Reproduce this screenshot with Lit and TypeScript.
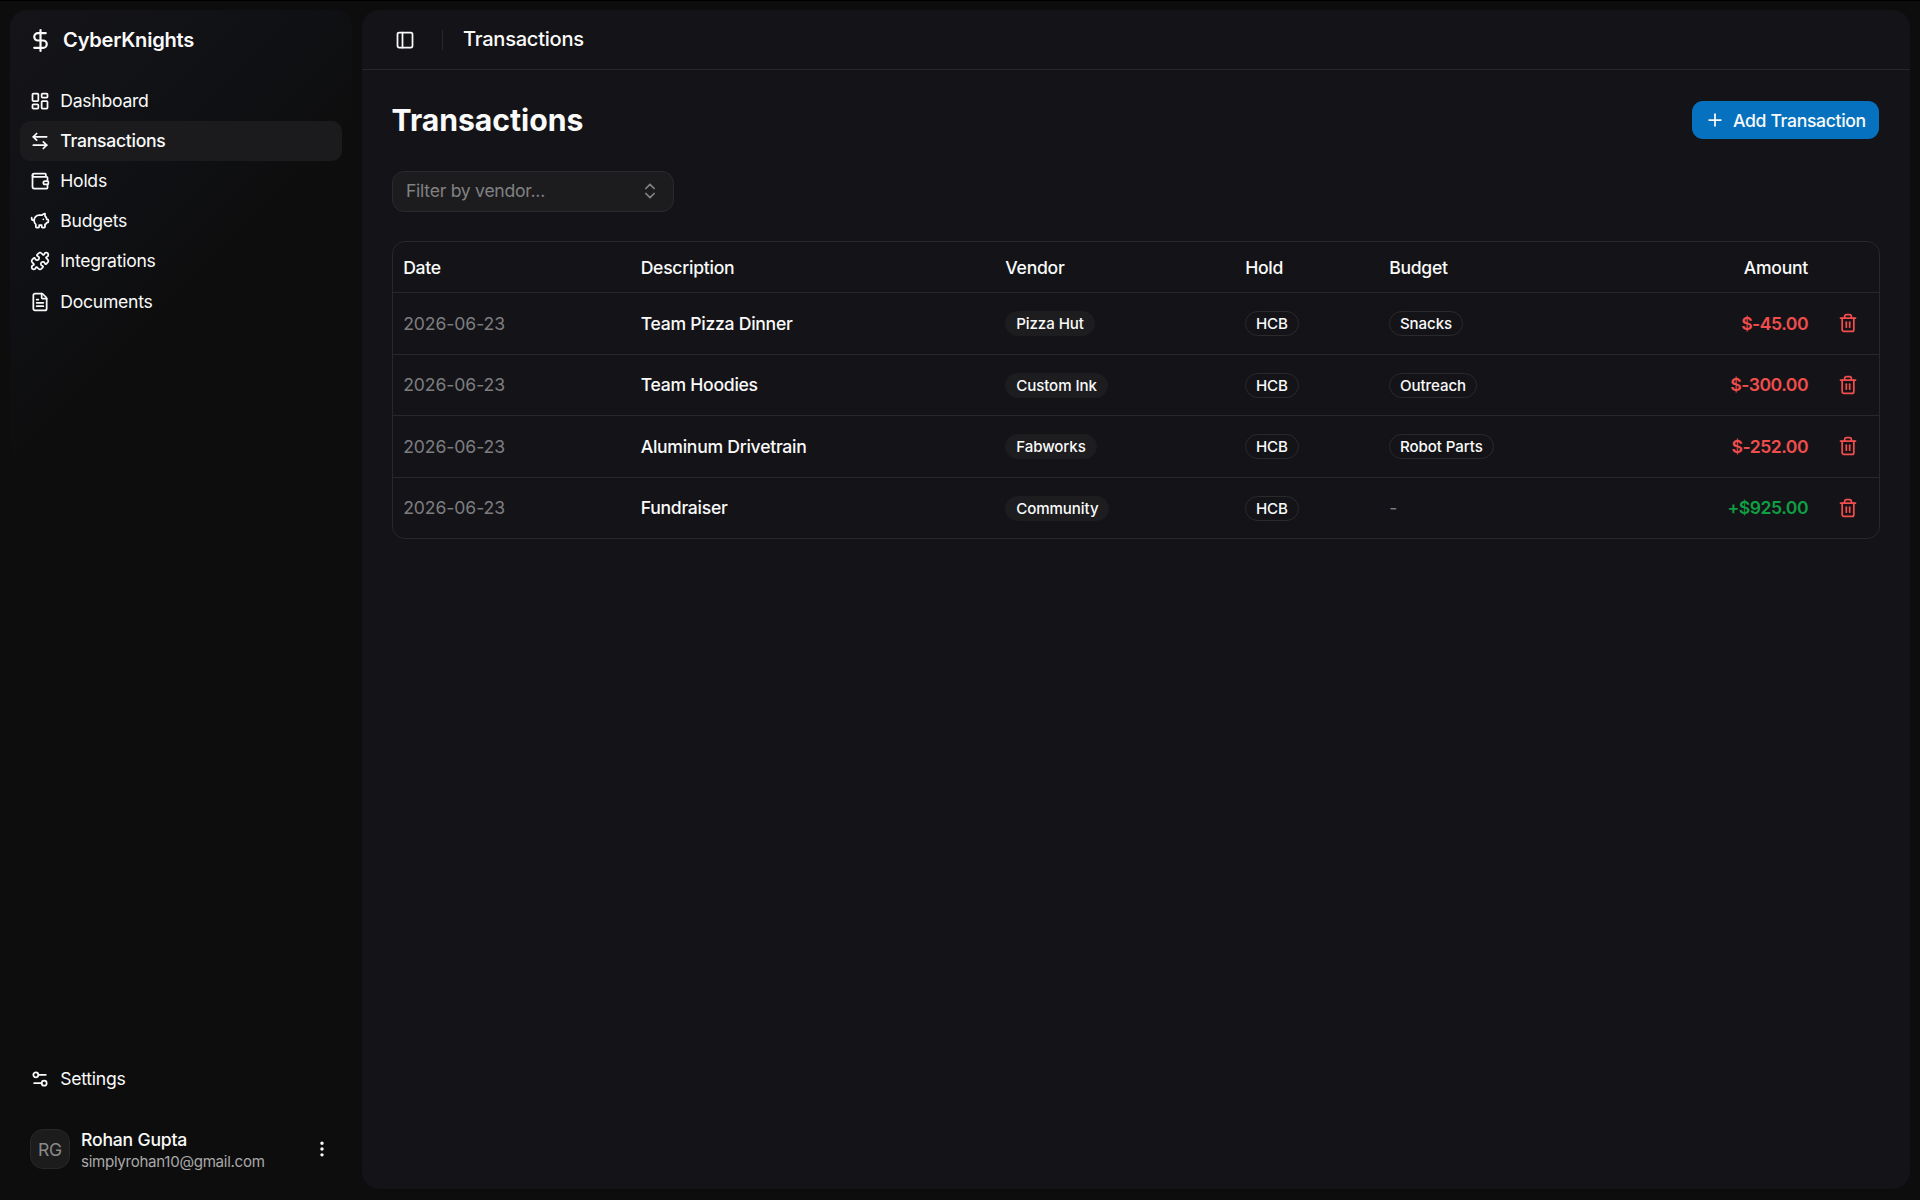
import { LitElement, html, css, svg } from "lit";
import { customElement, property } from "lit/decorators.js";

const ICONS: Record<string, unknown> = {
  dollar: svg`<line x1="12" x2="12" y1="2" y2="22"/><path d="M17 5H9.5a3.5 3.5 0 0 0 0 7h5a3.5 3.5 0 0 1 0 7H6"/>`,
  dashboard: svg`<rect width="7" height="9" x="3" y="3" rx="1"/><rect width="7" height="5" x="14" y="3" rx="1"/><rect width="7" height="9" x="14" y="12" rx="1"/><rect width="7" height="5" x="3" y="16" rx="1"/>`,
  arrows: svg`<path d="M8 3 4 7l4 4"/><path d="M4 7h16"/><path d="m16 21 4-4-4-4"/><path d="M20 17H4"/>`,
  wallet: svg`<path d="M19 7V4a1 1 0 0 0-1-1H5a2 2 0 0 0 0 4h15a1 1 0 0 1 1 1v4h-3a2 2 0 0 0 0 4h3a1 1 0 0 0 1-1v-2a1 1 0 0 0-1-1"/><path d="M3 5v14a2 2 0 0 0 2 2h15a1 1 0 0 0 1-1v-4"/>`,
  piggy: svg`<path d="M11 17h3v2a1 1 0 0 0 1 1h2a1 1 0 0 0 1-1v-3a3.16 3.16 0 0 0 2-2h1a1 1 0 0 0 1-1v-2a1 1 0 0 0-1-1h-1a5 5 0 0 0-2-4V3a4 4 0 0 0-3.2 1.6l-.3.4H11a6 6 0 0 0-6 6v1a5 5 0 0 0 2 4v3a1 1 0 0 0 1 1h2a1 1 0 0 0 1-1z"/><path d="M16 10h.01"/><path d="M2 8v1a2 2 0 0 0 2 2h1"/>`,
  puzzle: svg`<path d="M15.39 4.39a1 1 0 0 0 1.68-.474 2.5 2.5 0 1 1 3.014 3.015 1 1 0 0 0-.474 1.68l1.683 1.682a2.414 2.414 0 0 1 0 3.414L19.61 15.39a1 1 0 0 1-1.68-.474 2.5 2.5 0 1 0-3.014 3.015 1 1 0 0 1 .474 1.68l-1.683 1.682a2.414 2.414 0 0 1-3.414 0L8.61 19.61a1 1 0 0 0-1.68.474 2.5 2.5 0 1 1-3.014-3.015 1 1 0 0 0 .474-1.68l-1.683-1.682a2.414 2.414 0 0 1 0-3.414L4.39 8.61a1 1 0 0 1 1.68.474 2.5 2.5 0 1 0 3.014-3.015 1 1 0 0 1-.474-1.68l1.683-1.682a2.414 2.414 0 0 1 3.414 0z"/>`,
  file: svg`<path d="M6 22a2 2 0 0 1-2-2V4a2 2 0 0 1 2-2h8a2.4 2.4 0 0 1 1.704.706l3.588 3.588A2.4 2.4 0 0 1 20 8v12a2 2 0 0 1-2 2z"/><path d="M14 2v5a1 1 0 0 0 1 1h5"/><path d="M10 9H8"/><path d="M16 13H8"/><path d="M16 17H8"/>`,
  settings: svg`<path d="M14 17H5"/><path d="M19 7h-9"/><circle cx="17" cy="17" r="3"/><circle cx="7" cy="7" r="3"/>`,
  more: svg`<circle cx="12" cy="12" r="1"/><circle cx="12" cy="5" r="1"/><circle cx="12" cy="19" r="1"/>`,
  panel: svg`<rect width="18" height="18" x="3" y="3" rx="2"/><path d="M9 3v18"/>`,
  plus: svg`<path d="M5 12h14"/><path d="M12 5v14"/>`,
  updown: svg`<path d="m7 15 5 5 5-5"/><path d="m7 9 5-5 5 5"/>`,
  trash: svg`<path d="M10 11v6"/><path d="M14 11v6"/><path d="M19 6v14a2 2 0 0 1-2 2H7a2 2 0 0 1-2-2V6"/><path d="M3 6h18"/><path d="M8 6V4a2 2 0 0 1 2-2h4a2 2 0 0 1 2 2v2"/>`,
};

@customElement("ui-icon")
class UiIcon extends LitElement {
  static styles = css`
    :host { display: block; flex: none; width: 20px; height: 20px; }
    .glyph {
      display: block; width: 100%; height: 100%; fill: none; stroke: currentColor;
      stroke-width: 2.1; stroke-linecap: round; stroke-linejoin: round; overflow: visible;
    }
  `;
  @property() name = "";
  render() {
    return html`<svg class="glyph" viewBox="0 0 24 24">${ICONS[this.name]}</svg>`;
  }
}

const NAV = [
  { icon: "dashboard", label: "Dashboard" },
  { icon: "arrows", label: "Transactions", active: true },
  { icon: "wallet", label: "Holds" },
  { icon: "piggy", label: "Budgets" },
  { icon: "puzzle", label: "Integrations" },
  { icon: "file", label: "Documents" },
];

const ROWS = [
  { date: "2026-06-23", text: "Team Pizza Dinner", vendor: "Pizza Hut", hold: "HCB", budget: "Snacks", amount: -45 },
  { date: "2026-06-23", text: "Team Hoodies", vendor: "Custom Ink", hold: "HCB", budget: "Outreach", amount: -300 },
  { date: "2026-06-23", text: "Aluminum Drivetrain", vendor: "Fabworks", hold: "HCB", budget: "Robot Parts", amount: -252 },
  { date: "2026-06-23", text: "Fundraiser", vendor: "Community", hold: "HCB", budget: "", amount: 925 },
];

@customElement("app-root")
class AppRoot extends LitElement {
  static styles = css`
    * { box-sizing: border-box; }
    :host {
      display: flex; width: 1920px; height: 1200px; overflow: hidden;
      background: #0d0d0d; border-top: 1px solid #000; color: #fafafa;
      font-family: Inter, "Liberation Sans", sans-serif; font-size: 17.6px; line-height: 25px;
      letter-spacing: -0.27px; white-space: nowrap; box-sizing: border-box;
      padding: 9px 10px 11px; gap: 10.4px;
    }
    .sidebar {
      width: 342px; flex: none; border-radius: 17px; display: flex; flex-direction: column;
      padding: 0 10px 10px;
      background: linear-gradient(135deg, #141419 0, #101115 190px, #0d0d0d 345px);
    }
    .brand {
      display: flex; align-items: center; gap: 10.5px; height: 60px; padding-left: 7.5px;
      font-size: 20.1px; font-weight: 600; letter-spacing: -0.25px; margin-bottom: 10.6px;
    }
    .brand ui-icon { width: 25px; height: 25px; }
    .item { display: flex; align-items: center; gap: 10px; height: 40.2px; padding-left: 10.3px; border-radius: 10px; }
    .item.active { background: #1b1b1d; font-weight: 500; }
    .item span { padding-bottom: 1px; }
    .spacer { flex: 1; }
    .user { display: flex; align-items: center; gap: 11px; height: 60px; margin-top: 20px; padding: 0 10px; }
    .avatar {
      width: 40px; height: 40px; border-radius: 13px; background: #1c1c1d; border: 1px solid #282828;
      color: #8a8a8a; display: flex; align-items: center; justify-content: center;
    }
    .who { flex: 1; padding-top: 2px; }
    .name { font-weight: 500; line-height: 22px; letter-spacing: -0.2px; }
    .mail { font-size: 15.1px; line-height: 21px; color: #a9a9a9; letter-spacing: -0.29px; }
    .main { flex: 1; border-radius: 17px; background: #141418; }
    .topbar { height: 60px; border-bottom: 1px solid #28282a; display: flex; align-items: center; padding-left: 32.3px; font-size: 20.1px; font-weight: 500; }
    .rule { width: 1px; height: 20px; background: #29292b; margin: 0 20px 0 27.4px; }
    .content { padding: 31.4px 31px 0 29.2px; }
    .head { display: flex; justify-content: space-between; align-items: center; height: 38px; }
    .title { margin: 0; font-size: 30.2px; line-height: 38px; font-weight: 700; letter-spacing: -0.05px; }
    .add {
      height: 38px; width: 187px; border-radius: 11px; background: #0672bf; display: flex;
      align-items: center; gap: 8px; padding-left: 13px; font-weight: 500; letter-spacing: -0.33px;
    }
    .filter {
      margin-top: 32px; width: 282px; height: 40.5px; border: 1px solid #2a2a2c; border-radius: 12px;
      background: #1c1c1e; color: #818183; display: flex; align-items: center; justify-content: space-between; padding: 0 13px 1.6px 13.4px;
    }
    .table { margin-top: 29.5px; margin-right: -0.5px; border: 1px solid #28282a; border-radius: 13px; overflow: hidden; }
    .row {
      display: grid; grid-template-columns: 237.5px 364.7px 239.8px 144px 200px 1fr 70.5px; align-items: center;
      height: 61.5px; padding: 0 0 1.2px 10.6px; border-top: 1px solid #28282a;
    }
    .row.header { height: 50px; border-top: 0; font-weight: 500; padding-bottom: 0.6px; }
    .date { color: #7d7d80; letter-spacing: -0.08px; }
    .desc { font-weight: 500; }
    .right { text-align: right; }
    .pill {
      display: inline-flex; align-items: center; height: 25px; border-radius: 13px; padding: 0 9.8px;
      border: 1px solid #2a2a2c; font-size: 15.1px; font-weight: 500; letter-spacing: -0.08px; vertical-align: middle;
    }
    .pill.solid { background: #1d1d1f; border-color: #1d1d1f; }
    .none { color: #7d7d80; }
    .amount { text-align: right; font-weight: 600; color: #f14d4c; letter-spacing: -0.5px; }
    .amount.plus { color: #0f9f43; }
    .del { color: #f14d4c; display: flex; justify-content: center; padding-left: 10px; }
  `;

  private cell(text: string, solid = false) {
    return html`<div><span class="pill ${solid ? "solid" : ""}">${text}</span></div>`;
  }

  private money(n: number) {
    return (n > 0 ? "+$" : "$") + n.toFixed(2);
  }

  render() {
    return html`
      <aside class="sidebar">
        <div class="brand"><ui-icon name="dollar"></ui-icon><span>CyberKnights</span></div>
        ${NAV.map((n) => html`<div class="item ${n.active ? "active" : ""}"><ui-icon name=${n.icon}></ui-icon><span>${n.label}</span></div>`)}
        <div class="spacer"></div>
        <div class="item"><ui-icon name="settings"></ui-icon><span>Settings</span></div>
        <div class="user">
          <div class="avatar">RG</div>
          <div class="who"><div class="name">Rohan Gupta</div><div class="mail">simplyrohan10@gmail.com</div></div>
          <ui-icon name="more"></ui-icon>
        </div>
      </aside>
      <main class="main">
        <header class="topbar"><ui-icon name="panel"></ui-icon><div class="rule"></div><span>Transactions</span></header>
        <div class="content">
          <div class="head"><h1 class="title">Transactions</h1><div class="add"><ui-icon name="plus"></ui-icon><span>Add Transaction</span></div></div>
          <div class="filter"><span>Filter by vendor...</span><ui-icon name="updown"></ui-icon></div>
          <div class="table">
            <div class="row header"><div>Date</div><div>Description</div><div>Vendor</div><div>Hold</div><div>Budget</div><div class="right">Amount</div><div></div></div>
            ${ROWS.map((r) => html`<div class="row">
              <div class="date">${r.date}</div><div class="desc">${r.text}</div>
              ${this.cell(r.vendor, true)}${this.cell(r.hold)}
              <div>${r.budget ? html`<span class="pill">${r.budget}</span>` : html`<span class="none">-</span>`}</div>
              <div class="amount ${r.amount > 0 ? "plus" : ""}">${this.money(r.amount)}</div>
              <div class="del"><ui-icon name="trash"></ui-icon></div>
            </div>`)}
          </div>
        </div>
      </main>`;
  }
}
